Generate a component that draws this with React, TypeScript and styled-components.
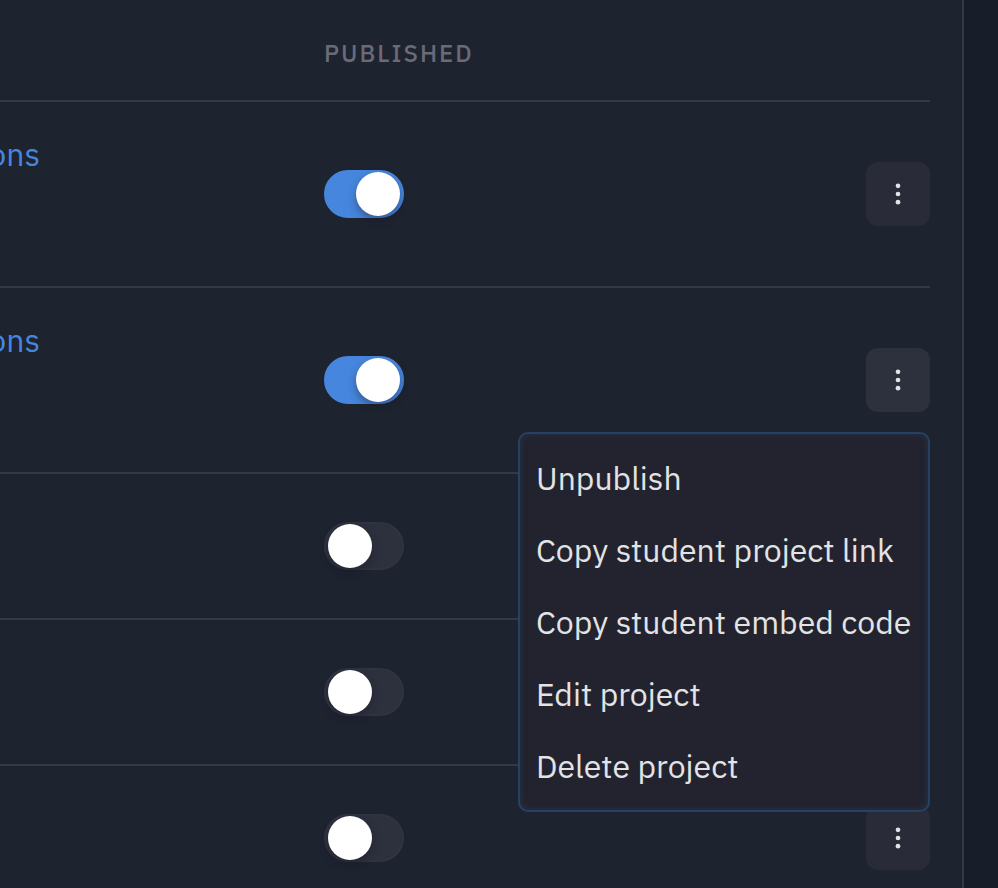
import React, { useState } from "react";
import styled, { createGlobalStyle } from "styled-components";

const color = {
  page: "#181d2a",
  panel: "#1e2330",
  line: "#363845",
  button: "#292b39",
  buttonActive: "#2d313e",
  menu: "#22232e",
  menuBorder: "#284162",
  text: "#e2e3e5",
  muted: "#6a6b77",
  blue: "#4786de",
};

const GlobalStyle = createGlobalStyle`
  *, *::before, *::after { box-sizing: border-box; }
  body {
    margin: 0;
    background: ${color.page};
    color: ${color.text};
    font-family: "IBM Plex Sans", Roboto, "Liberation Sans", sans-serif;
    font-size: 32px;
    line-height: 40px;
  }
`;

const Page = styled.div`
  height: 100vh;
  overflow: hidden;
  padding-right: 34px;
`;

const Panel = styled.main`
  min-height: 100%;
  padding-right: 32px;
  background: ${color.panel};
  border-right: 2px solid ${color.line};
`;

const Table = styled.table`
  width: 100%;
  table-layout: fixed;
  border-collapse: separate;
  border-spacing: 0;
`;

const HeaderCell = styled.th<{ $width?: string }>`
  width: ${(p) => p.$width ?? "auto"};
  height: 102px;
  padding: 6px 0 0;
  border-bottom: 2px solid ${color.line};
  color: ${color.muted};
  font-size: 24px;
  line-height: 32px;
  font-weight: 500;
  letter-spacing: 2px;
  text-align: left;
  text-transform: uppercase;
`;

const Row = styled.tr<{ $tall?: boolean }>`
  height: ${(p) => (p.$tall ? 186 : 146)}px;
`;

const Cell = styled.td`
  padding: 0;
  border-bottom: 2px solid ${color.line};
  vertical-align: middle;
`;

const NameCell = styled(Cell)`
  padding-top: 32px;
  vertical-align: top;
`;

const ProjectLink = styled.a`
  display: flex;
  justify-content: flex-end;
  width: 40px;
  color: ${color.blue};
  text-decoration: none;
`;

const Switch = styled.input`
  appearance: none;
  display: block;
  width: 80px;
  height: 48px;
  margin: 0;
  padding: 0 2px;
  border: 2px solid #313341;
  border-radius: 24px;
  background: ${color.buttonActive};
  cursor: pointer;

  &::before {
    content: "";
    display: block;
    width: 44px;
    height: 44px;
    border-radius: 50%;
    background: #fff;
    box-shadow: 0 4px 8px rgba(20, 20, 32, 0.4);
  }

  &:checked {
    border-color: ${color.blue};
    background: ${color.blue};
  }

  &:checked::before {
    margin-left: auto;
  }
`;

const Actions = styled.div`
  position: relative;
  display: flex;
  justify-content: flex-end;
`;

const MoreButton = styled.button<{ $active?: boolean }>`
  display: flex;
  align-items: center;
  justify-content: center;
  width: 64px;
  height: 64px;
  padding: 0;
  border: 0;
  border-radius: 12px;
  background: ${(p) => (p.$active ? color.buttonActive : color.button)};
  color: ${color.text};
  cursor: pointer;
`;

const Menu = styled.div`
  position: absolute;
  z-index: 1;
  top: calc(100% + 20px);
  right: 0;
  display: flex;
  flex-direction: column;
  min-width: 412px;
  padding: 8px 0;
  border: 2px solid ${color.menuBorder};
  border-radius: 10px;
  background: ${color.menu};
  box-shadow: inset 0 0 6px rgba(40, 65, 98, 0.6);
`;

const MenuItem = styled.button`
  height: 72px;
  padding: 0 16px;
  border: 0;
  background: none;
  color: inherit;
  font: inherit;
  text-align: left;
  white-space: nowrap;
  cursor: pointer;
`;

const DotsIcon = () => (
  <svg width="8" height="24" viewBox="0 0 8 24" fill="currentColor" aria-hidden="true">
    <circle cx="4" cy="3.8" r="2.35" />
    <circle cx="4" cy="12" r="2.35" />
    <circle cx="4" cy="20.2" r="2.35" />
  </svg>
);

const menuItems = [
  "Unpublish",
  "Copy student project link",
  "Copy student embed code",
  "Edit project",
  "Delete project",
];

const initialProjects = [
  { id: 1, name: "ons", published: true },
  { id: 2, name: "ons", published: true },
  { id: 3, name: "", published: false },
  { id: 4, name: "", published: false },
  { id: 5, name: "", published: false },
];

export default function App() {
  const [projects, setProjects] = useState(initialProjects);
  const [openId, setOpenId] = useState<number | null>(2);

  const togglePublished = (id: number) =>
    setProjects((list) =>
      list.map((p) => (p.id === id ? { ...p, published: !p.published } : p))
    );

  return (
    <Page>
      <GlobalStyle />
      <Panel>
        <Table>
          <thead>
            <tr>
              <HeaderCell $width="324px" aria-label="Project" />
              <HeaderCell>Published</HeaderCell>
              <HeaderCell $width="64px" aria-label="Actions" />
            </tr>
          </thead>
          <tbody>
            {projects.map((p) => (
              <Row key={p.id} $tall={p.name !== ""}>
                <NameCell>
                  {p.name && <ProjectLink href="#">{p.name}</ProjectLink>}
                </NameCell>
                <Cell>
                  <Switch
                    type="checkbox"
                    aria-label="Published"
                    checked={p.published}
                    onChange={() => togglePublished(p.id)}
                  />
                </Cell>
                <Cell>
                  <Actions>
                    <MoreButton
                      type="button"
                      aria-label="Project actions"
                      aria-haspopup="menu"
                      aria-expanded={openId === p.id}
                      $active={openId === p.id}
                      onClick={() => setOpenId(openId === p.id ? null : p.id)}
                    >
                      <DotsIcon />
                    </MoreButton>
                    {openId === p.id && (
                      <Menu role="menu">
                        {menuItems.map((label) => (
                          <MenuItem key={label} type="button" role="menuitem">
                            {label}
                          </MenuItem>
                        ))}
                      </Menu>
                    )}
                  </Actions>
                </Cell>
              </Row>
            ))}
          </tbody>
        </Table>
      </Panel>
    </Page>
  );
}
